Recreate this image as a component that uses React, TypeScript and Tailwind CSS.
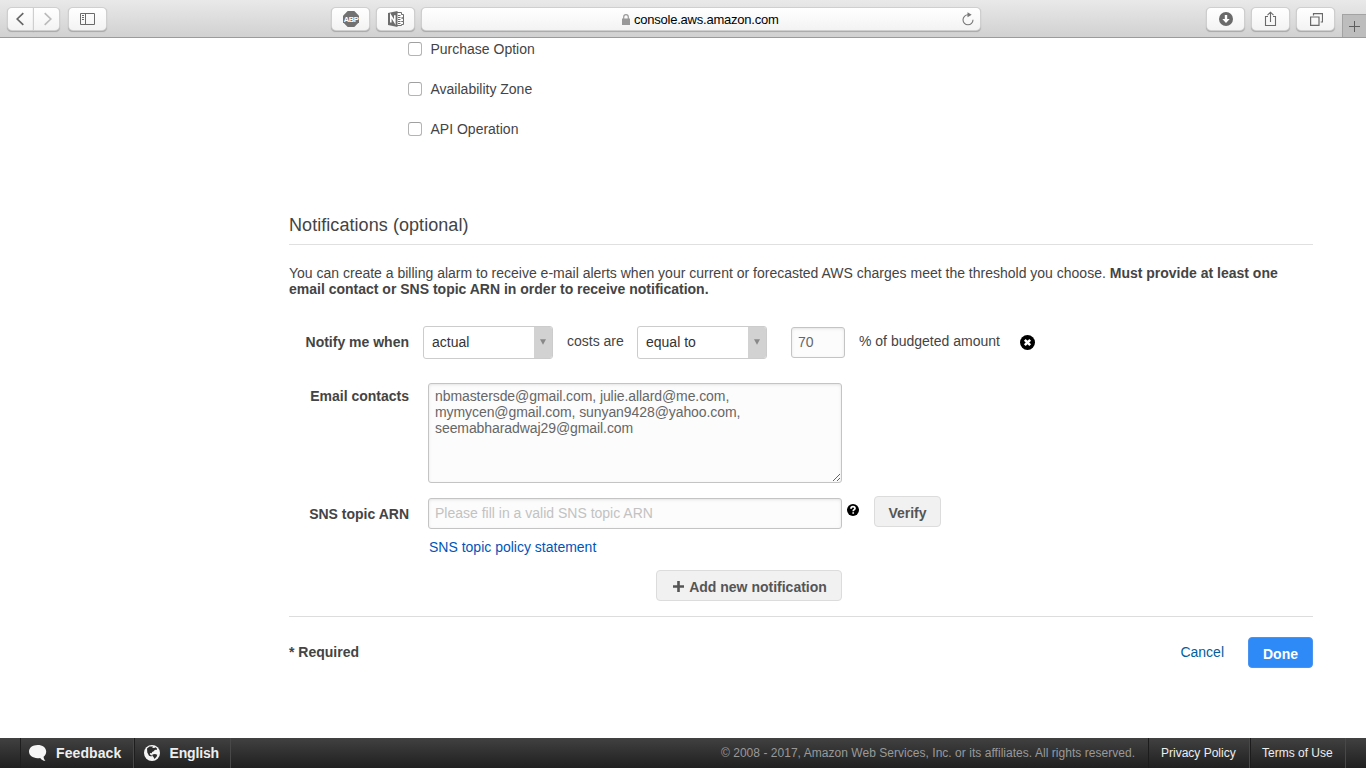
import type { ReactNode } from 'react'

function ToolButton({ className = '', children }: { className?: string; children: ReactNode }) {
  return (
    <button
      className={`flex h-[22px] shrink-0 items-center justify-center rounded-[4px] bg-linear-to-b from-white to-[#f3f3f3] text-[#6a6a6a] shadow-[0_0_0_1px_#cfcfcf,0_1px_1px_0.5px_#a8a8a8] ${className}`}
    >
      {children}
    </button>
  )
}

function BrowserBar() {
  return (
    <header className="flex h-[38px] items-start border-b border-[#9b9b9b] bg-linear-to-b from-[#e9e9e9] to-[#d1d1d1] pt-2 pl-2">
      <ToolButton className="w-[25px] rounded-r-none">
        <svg className="ml-[-2px]" width="8" height="14" viewBox="0 0 8 14" fill="none" stroke="#666" strokeWidth="1.7"><path d="M7.300 1.200 1.200 7l6.100 5.800" /></svg>
      </ToolButton>
      <ToolButton className="ml-px w-[25px] rounded-l-none">
        <svg className="ml-[2px]" width="8" height="14" viewBox="0 0 8 14" fill="none" stroke="#bbb" strokeWidth="1.7"><path d="M.7 1.200 6.800 7 .7 12.800" /></svg>
      </ToolButton>
      <ToolButton className="ml-[10px] w-[37px]">
        <svg className="ml-[-1px]" width="15" height="12" viewBox="0 0 15 12" fill="none" stroke="#6a6a6a"><path d="M.5.500h14v11H.5zM5.500.500v11M2 2.500h2M2 4.500h2M2 6.500h2" /></svg>
      </ToolButton>
      <ToolButton className="ml-[226px] w-[37px]">
        <svg className="ml-px overflow-visible" width="16" height="16" viewBox="0 0 16 16">
          <path d="M4.7 0h6.6L16 4.7v6.6L11.3 16H4.7L0 11.3V4.7z" fill="#727272" />
          <text x="8" y="11" textAnchor="middle" fontFamily="Liberation Sans, sans-serif" fontSize="7.500" letterSpacing="-0.400" fontWeight="700" fill="#fff">ABP</text>
        </svg>
      </ToolButton>
      <ToolButton className="ml-[8px] w-[37px]">
        <svg className="ml-[2px]" width="17" height="16" viewBox="0 0 17 16">
          <path d="M9 1.500h5v13H9z" fill="#fff" />
          <path d="M9 1.500h4.500v2h2v3.500h-2 2v3.500h-2 2v3h-2v1H9M10 4.500h2.500M10 6.500h2.500M10 8.500h2.500M10 10.500h2.500M10 12.500h2.500" fill="none" stroke="#6d6d6d" />
          <path d="M0 2 9.5 0v16L0 14z" fill="#6d6d6d" />
          <path d="M2.800 11.600V4.600l4 6.600V4.300" fill="none" stroke="#fff" strokeWidth="1.600" />
        </svg>
      </ToolButton>
      <div className="ml-[8px] flex h-[22px] w-[558px] items-center rounded-[4px] bg-linear-to-b from-white to-[#f3f3f3] pr-[6px] pl-[200px] text-[13px] text-black shadow-[0_0_0_1px_#cfcfcf,0_1px_1px_0.5px_#a8a8a8]">
        <svg width="8" height="11" viewBox="0 0 8 11"><path d="M0 4.500h8V11H0z" fill="#999" /><path d="M1.700 5V3a2.300 2.300 0 0 1 4.600 0v2" fill="none" stroke="#999" strokeWidth="1.200" /></svg>
        <span className="mt-px ml-[4px] tracking-[-0.23px]">console.aws.amazon.com</span>
        <svg className="mt-[-1px] ml-auto" width="12" height="14" viewBox="0 0 12 14"><path d="M6 2.800A5 5 0 1 0 11 7.800" fill="none" stroke="#777" strokeWidth="1.100" /><path d="M5.500.300 9.700 2.800 5.500 5.300z" fill="#777" /></svg>
      </div>
      <ToolButton className="ml-[227px] w-[37px]">
        <svg className="ml-px" width="14" height="14" viewBox="0 0 14 14"><circle cx="7" cy="7" r="7" fill="#6a6a6a" /><path d="M5.800 3h2.400v4h2.500L7 11 3.300 7h2.500z" fill="#fff" /></svg>
      </ToolButton>
      <ToolButton className="ml-[8px] w-[37px]">
        <svg className="mt-[-1px]" width="13" height="16" viewBox="0 0 13 16" fill="none" stroke="#6a6a6a" strokeWidth="1.100"><path d="M4 5.500H1.500v9h10v-9H9M6.500 11V1.500M3.500 4.200l3-3 3 3" /></svg>
      </ToolButton>
      <ToolButton className="ml-[8px] w-[37px]">
        <svg className="ml-px" width="13" height="13" viewBox="0 0 13 13" fill="none" stroke="#6a6a6a" strokeWidth="1.200"><path d="M.6 4h8.400v8.400H.6zM3.500 2.500V.6h9v8.400h-1.800" /></svg>
      </ToolButton>
      <div className="mt-[6px] ml-[8px] flex h-[23px] flex-1 items-center justify-center border-t border-l border-[#a3a3a3] bg-[#bdbdbd]">
        <svg width="11" height="11" viewBox="0 0 11 11" stroke="#5e5e5e"><path d="M5.500 0v11M0 5.500h11" /></svg>
      </div>
    </header>
  )
}

function CheckRow({ label }: { label: string }) {
  return (
    <label className="flex h-[22px] items-center gap-[8.5px]">
      <input type="checkbox" className="size-[14px] appearance-none rounded-[3px] border border-[#b4b4b4] border-t-[#a0a0a0] bg-white" />
      <span>{label}</span>
    </label>
  )
}

function SelectBox({ value, className = '' }: { value: string; className?: string }) {
  return (
    <div className={`flex h-[33px] w-[130px] shrink-0 items-center overflow-hidden rounded-[3px] border border-[#cccccc] bg-white ${className}`}>
      <span className="mt-[-1px] flex-1 pl-[8px] text-[#333]">{value}</span>
      <span className="flex h-full w-[18px] items-center justify-center bg-[#d2d2d2]">
        <svg className="mt-[-2px]" width="6" height="6" viewBox="0 0 6 6"><path d="M0 .3h6L3 5.700z" fill="#888" /></svg>
      </span>
    </div>
  )
}

function Footer() {
  return (
    <footer className="flex h-[30px] items-center bg-linear-to-b from-[#414141] to-[#202020] pl-[20px] text-[#eee]">
      <div className="flex h-full w-[114px] items-center border-x border-l-[#1e1e1e] border-r-[#484848] pl-[8px] font-bold">
        <svg width="18" height="16" viewBox="0 0 18 16"><path d="M8.600 0C13.600 0 17.200 2.700 17.200 6.500c0 2.200-1 4-2.600 5.200.1 1.700.7 2.900 1.900 4.100-2.300-.1-4.100-1-5.300-2.900-.8.200-1.700.3-2.600.3C3.600 13.200 0 10.400 0 6.600S3.600 0 8.600 0z" fill="#f5f5f5" /></svg>
        <span className="ml-[9px] tracking-[0.1px]">Feedback</span>
      </div>
      <div className="flex h-full w-[97px] items-center border-x border-l-[#1e1e1e] border-r-[#484848] pl-[9px] font-bold">
        <svg width="16" height="16" viewBox="0 0 16 16"><circle cx="8" cy="8" r="8" fill="#f5f5f5" /><path d="M3 3.500 5.500 1.500 9 1.600l-.8 1.200 2 .300 1.300-.800 1.700 1.500-.7 1.200-1.500-.200-1.300 1.500-1.600.7-.3 1.300-2-.4.6 2 1.500.3-.5 1.200L5 10.700 3.300 7.500zM8.500 9.500l2.500-.500 2.300.8-.7 2-2.100 2.200-1-2.100-1.200-1.100z" fill="#2d2d2d" /></svg>
        <span className="ml-[9.5px] tracking-[-0.15px]">English</span>
      </div>
      <span className="ml-auto text-[12px] tracking-[0.035px] text-[#999]">© 2008 - 2017, Amazon Web Services, Inc. or its affiliates. All rights reserved.</span>
      <div className="ml-[13px] flex h-full w-[102px] items-center border-x border-l-[#1c1c1c] border-r-[#484848] pl-[12px] text-[12px] whitespace-nowrap">Privacy Policy</div>
      <div className="flex h-full w-[96px] items-center border-x border-l-[#1c1c1c] border-r-[#484848] pl-[11px] text-[12px] whitespace-nowrap">Terms of Use</div>
      <div className="w-[20px]" />
    </footer>
  )
}

export default function App() {
  return (
    <div className="flex h-screen flex-col overflow-hidden bg-white font-['Liberation_Sans',Arial,sans-serif] text-[14px] leading-[16px] text-[#444]">
      <BrowserBar />
      <main className="flex-1 pr-[53px] pl-[289px]">
        <div className="flex flex-col gap-[18px] pl-[119px]">
          <CheckRow label="Purchase Option" />
          <CheckRow label="Availability Zone" />
          <CheckRow label="API Operation" />
        </div>
        <h2 className="mt-[65px] flex h-[40px] items-center border-b border-[#e0e0e0] text-[18px] tracking-[0.06px]">Notifications (optional)</h2>
        <p className="mt-[20px] whitespace-nowrap">
          You can create a billing alarm to receive e-mail alerts when your current or forecasted AWS charges meet the threshold you choose. <b>Must provide at least one</b>
          <br />
          <b>email contact or SNS topic ARN in order to receive notification.</b>
        </p>
        <div className="mt-[29px] flex h-[33px] items-center whitespace-nowrap">
          <b className="mt-[-1px] w-[120px] text-right">Notify me when</b>
          <SelectBox value="actual" className="ml-[14px]" />
          <span className="mt-[-3px] w-[84px] pl-[14px]">costs are</span>
          <SelectBox value="equal to" />
          <input defaultValue="70" className="ml-[24px] h-[31px] w-[54px] rounded-[3px] border border-[#c4c4c4] bg-[#fcfcfc] px-[6px] pb-[2px] text-[#666] shadow-[inset_0_1px_3px_#e4e4e4]" />
          <span className="mt-[-3px] w-[175px] pl-[14px]">% of budgeted amount</span>
          <svg width="15" height="15" viewBox="0 0 15 15"><circle cx="7.500" cy="7.500" r="7.500" fill="#000" /><path d="m4.800 4.800 5.400 5.400M10.200 4.800l-5.400 5.400" stroke="#fff" strokeWidth="2.500" /></svg>
        </div>
        <div className="mt-[24px] flex h-[100px]">
          <b className="w-[120px] pt-[5px] text-right">Email contacts</b>
          <textarea
            className="ml-[19px] h-[100px] w-[414px] resize rounded-[3px] border border-[#c4c4c4] bg-[#fcfcfc] px-[6px] py-[4px] tracking-[-0.08px] text-[#666] shadow-[inset_0_1px_3px_#e4e4e4]"
            defaultValue={'nbmastersde@gmail.com, julie.allard@me.com,\nmymycen@gmail.com, sunyan9428@yahoo.com,\nseemabharadwaj29@gmail.com'}
          />
        </div>
        <div className="mt-[15px] flex h-[31px]">
          <b className="w-[120px] pt-[8px] text-right">SNS topic ARN</b>
          <input placeholder="Please fill in a valid SNS topic ARN" className="ml-[19px] w-[414px] rounded-[3px] border border-[#c4c4c4] bg-[#fcfcfc] px-[6px] pb-[2px] shadow-[inset_0_1px_3px_#e4e4e4] placeholder:text-[#c2c2c2]" />
          <svg className="mt-[6px] ml-[5px]" width="12" height="12" viewBox="0 0 12 12"><circle cx="6" cy="6" r="6" fill="#000" /><path d="M4 4.700C4 3.200 4.900 2.700 6 2.700s2 .6 2 1.700c0 1.300-1.800 1.300-1.800 2.800M6.200 8.200v1.500" fill="none" stroke="#fff" strokeWidth="1.700" /></svg>
          <button className="mt-[-2px] ml-[15px] h-[31px] w-[67px] rounded-[4px] border border-[#dcdcdc] bg-[#f1f1f1] pt-[2px] font-bold text-[#555]">Verify</button>
        </div>
        <a className="mt-[10px] block w-[170px] pl-[140px] whitespace-nowrap text-[#0055b8]">SNS topic policy statement</a>
        <div className="mt-[15px] flex w-[553px] justify-end">
          <button className="flex h-[31px] w-[186px] items-center justify-center gap-[5px] rounded-[4px] border border-[#dcdcdc] bg-[#f1f1f1] pt-[2px] pl-[2px] font-bold whitespace-nowrap text-[#555]">
            <svg width="11" height="11" viewBox="0 0 11 11" stroke="#555" strokeWidth="2.600"><path d="M5.500 0v11M0 5.500h11" /></svg>
            Add new notification
          </button>
        </div>
        <div className="mt-[15px] flex items-start border-t border-[#dddddd] pt-[20px]">
          <b className="mt-[7px]">* Required</b>
          <a className="mt-[7px] mr-[24px] ml-auto text-[#00609c]">Cancel</a>
          <button className="h-[31px] w-[65px] rounded-[4px] border border-[#4a93ef] bg-[#2e8af6] pt-[2px] font-bold text-white">Done</button>
        </div>
      </main>
      <Footer />
    </div>
  )
}
